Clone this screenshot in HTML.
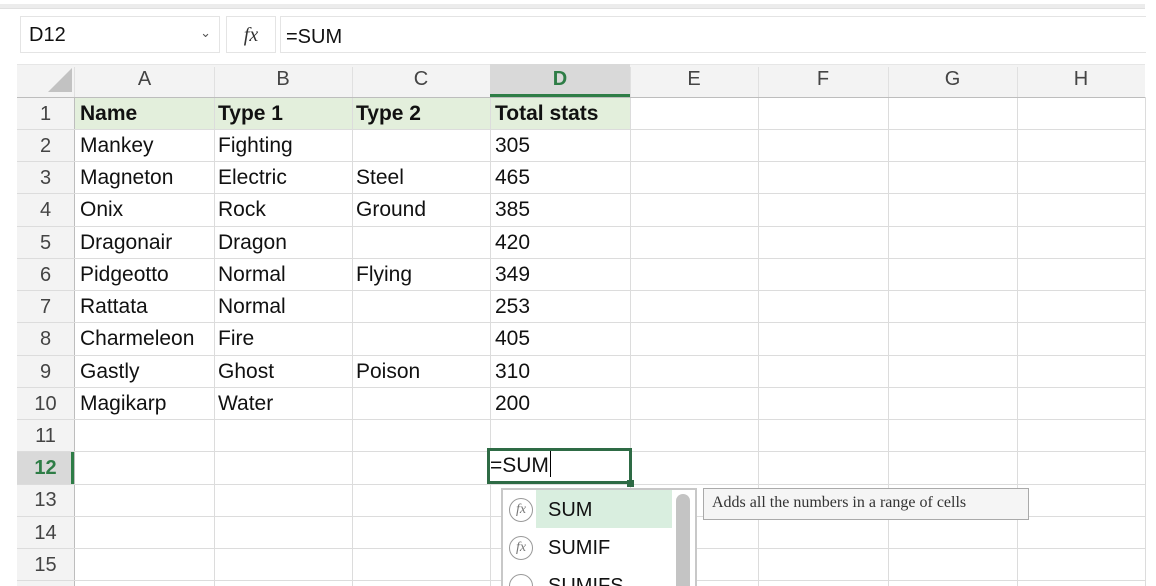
<!DOCTYPE html>
<html style="width:1156px;height:586px;overflow:hidden"><head><meta charset="utf-8"><style>
*{margin:0;padding:0;box-sizing:border-box}
body{width:1156px;height:586px;background:#fff;position:relative;overflow:hidden;font-family:"Liberation Sans",sans-serif;color:#111}
.a{position:absolute}
.vl{position:absolute;width:1px;background:#dcdcdc;top:97px;height:489px}
.hl{position:absolute;height:1px;background:#dcdcdc;left:17px;width:1128px}
.rh{position:absolute;left:17px;width:57px;text-align:center;font-size:20px;color:#444;line-height:32px}
.ch{position:absolute;top:64px;height:33px;line-height:30px;text-align:center;font-size:20px;color:#444}
.c{position:absolute;font-size:21px;line-height:32px;white-space:nowrap}
.hs{position:absolute;top:67px;height:30px;width:1px;background:#e0e0e0}
</style></head><body>
<div class="a" style="left:0;top:4px;width:1145px;height:5px;background:#ececec;border-bottom:1px solid #e0e0e0"></div>
<div class="a" style="left:20px;top:16px;width:200px;height:37px;background:#fff;border:1px solid #e4e4e4;font-size:20px;line-height:36px;padding-left:8px">D12<span style="position:absolute;right:8px;top:-2px;font-size:13px;color:#555">&#8964;</span></div>
<div class="a" style="left:226px;top:16px;width:50px;height:37px;background:#fff;border:1px solid #e4e4e4;font-family:'Liberation Serif',serif;font-style:italic;font-size:20px;line-height:36px;text-align:center;color:#333">fx</div>
<div class="a" style="left:280px;top:16px;width:866px;height:37px;background:#fff;border:1px solid #e4e4e4;border-right:none;font-size:20px;line-height:40px;padding-left:5px">=SUM</div>
<div class="a" style="left:17px;top:64px;width:1128px;height:33px;background:#f3f3f3;border-top:1px solid #e6e6e6"></div>
<div class="a" style="left:17px;top:97px;width:57px;height:489px;background:#f3f3f3"></div>
<div class="a" style="left:48px;top:68px;width:0;height:0;border-left:24px solid transparent;border-bottom:24px solid #c2c2c2"></div>
<div class="a" style="left:75px;top:97px;width:555px;height:32px;background:#e3efdc"></div>
<div class="a" style="left:490px;top:64px;width:140px;height:33px;background:#d9d9d9;border-bottom:3px solid #2e7d46"></div>
<div class="a" style="left:17px;top:451px;width:57px;height:33px;background:#d9d9d9;border-right:3px solid #2e7d46"></div>
<div class="hs" style="left:74px"></div><div class="hs" style="left:214px"></div><div class="hs" style="left:352px"></div><div class="hs" style="left:630px"></div><div class="hs" style="left:758px"></div><div class="hs" style="left:888px"></div><div class="hs" style="left:1017px"></div>
<div class="vl" style="left:74px;background:#bdbdbd"></div>
<div class="vl" style="left:214px"></div><div class="vl" style="left:352px"></div><div class="vl" style="left:490px"></div><div class="vl" style="left:630px"></div><div class="vl" style="left:758px"></div><div class="vl" style="left:888px"></div><div class="vl" style="left:1017px"></div><div class="vl" style="left:1145px"></div>
<div class="hl" style="top:97px;background:#bdbdbd"></div>
<div class="hl" style="top:129px"></div><div class="hl" style="top:161px"></div><div class="hl" style="top:193px"></div><div class="hl" style="top:226px"></div><div class="hl" style="top:258px"></div><div class="hl" style="top:290px"></div><div class="hl" style="top:322px"></div><div class="hl" style="top:355px"></div><div class="hl" style="top:387px"></div><div class="hl" style="top:419px"></div><div class="hl" style="top:451px"></div><div class="hl" style="top:484px"></div><div class="hl" style="top:516px"></div><div class="hl" style="top:548px"></div><div class="hl" style="top:580px"></div>
<div class="ch" style="left:75px;width:139px">A</div><div class="ch" style="left:214px;width:138px">B</div><div class="ch" style="left:352px;width:138px">C</div><div class="ch" style="left:490px;width:140px;font-weight:bold;color:#2e7d46">D</div><div class="ch" style="left:630px;width:128px">E</div><div class="ch" style="left:758px;width:130px">F</div><div class="ch" style="left:888px;width:129px">G</div><div class="ch" style="left:1017px;width:128px">H</div>
<div class="rh" style="top:98px">1</div><div class="rh" style="top:130px">2</div><div class="rh" style="top:162px">3</div><div class="rh" style="top:194px">4</div><div class="rh" style="top:227px">5</div><div class="rh" style="top:259px">6</div><div class="rh" style="top:291px">7</div><div class="rh" style="top:323px">8</div><div class="rh" style="top:356px">9</div><div class="rh" style="top:388px">10</div><div class="rh" style="top:420px">11</div><div class="rh" style="top:452px;font-weight:bold;color:#2e7d46">12</div><div class="rh" style="top:484px">13</div><div class="rh" style="top:517px">14</div><div class="rh" style="top:549px">15</div>
<div class="c" style="left:80px;top:98px;font-weight:bold">Name</div><div class="c" style="left:218px;top:98px;font-weight:bold">Type 1</div><div class="c" style="left:356px;top:98px;font-weight:bold">Type 2</div><div class="c" style="left:495px;top:98px;font-weight:bold">Total stats</div>
<div class="c" style="left:80px;top:130px">Mankey</div><div class="c" style="left:218px;top:130px">Fighting</div><div class="c" style="left:495px;top:130px">305</div>
<div class="c" style="left:80px;top:162px">Magneton</div><div class="c" style="left:218px;top:162px">Electric</div><div class="c" style="left:356px;top:162px">Steel</div><div class="c" style="left:495px;top:162px">465</div>
<div class="c" style="left:80px;top:194px">Onix</div><div class="c" style="left:218px;top:194px">Rock</div><div class="c" style="left:356px;top:194px">Ground</div><div class="c" style="left:495px;top:194px">385</div>
<div class="c" style="left:80px;top:227px">Dragonair</div><div class="c" style="left:218px;top:227px">Dragon</div><div class="c" style="left:495px;top:227px">420</div>
<div class="c" style="left:80px;top:259px">Pidgeotto</div><div class="c" style="left:218px;top:259px">Normal</div><div class="c" style="left:356px;top:259px">Flying</div><div class="c" style="left:495px;top:259px">349</div>
<div class="c" style="left:80px;top:291px">Rattata</div><div class="c" style="left:218px;top:291px">Normal</div><div class="c" style="left:495px;top:291px">253</div>
<div class="c" style="left:80px;top:323px">Charmeleon</div><div class="c" style="left:218px;top:323px">Fire</div><div class="c" style="left:495px;top:323px">405</div>
<div class="c" style="left:80px;top:356px">Gastly</div><div class="c" style="left:218px;top:356px">Ghost</div><div class="c" style="left:356px;top:356px">Poison</div><div class="c" style="left:495px;top:356px">310</div>
<div class="c" style="left:80px;top:388px">Magikarp</div><div class="c" style="left:218px;top:388px">Water</div><div class="c" style="left:495px;top:388px">200</div>
<div class="a" style="left:487px;top:448px;width:145px;height:36px;border:3px solid #2e6b45;background:#fff"></div>
<div class="a" style="left:627px;top:480px;width:7px;height:7px;background:#2e6b45"></div>
<div class="c" style="left:490px;top:450px">=SUM<span style="display:inline-block;width:1px;height:26px;background:#000;vertical-align:-5px;margin-left:1px"></span></div>
<div class="a" style="left:501px;top:488px;width:196px;height:98px;overflow:hidden;background:#fff;border:2px solid #c8c8c8;border-bottom:none">
<div class="a" style="left:33px;top:0;width:136px;height:38px;background:#d9eedf"></div>
<div class="a" style="left:173px;top:4px;width:14px;height:100px;background:#c4c4c4;border-radius:7px"></div>
<div class="a" style="left:6px;top:8px;width:24px;height:24px;border:1.5px solid #999;border-radius:50%;font-family:'Liberation Serif',serif;font-style:italic;font-size:14px;color:#777;text-align:center;line-height:21px">fx</div>
<div class="a" style="left:6px;top:46px;width:24px;height:24px;border:1.5px solid #999;border-radius:50%;font-family:'Liberation Serif',serif;font-style:italic;font-size:14px;color:#777;text-align:center;line-height:21px">fx</div>
<div class="a" style="left:6px;top:84px;width:24px;height:24px;border:1.5px solid #999;border-radius:50%"></div>
<div class="c" style="left:45px;top:4px;font-size:20px">SUM</div>
<div class="c" style="left:45px;top:42px;font-size:20px">SUMIF</div>
<div class="c" style="left:45px;top:80px;font-size:20px">SUMIFS</div>
</div>
<div class="a" style="left:703px;top:488px;width:326px;height:32px;background:#f5f5f5;border:1.5px solid #aaa;font-family:'Liberation Serif',serif;font-size:16px;line-height:28px;padding-left:8px;color:#333">Adds all the numbers in a range of cells</div>
</body></html>
